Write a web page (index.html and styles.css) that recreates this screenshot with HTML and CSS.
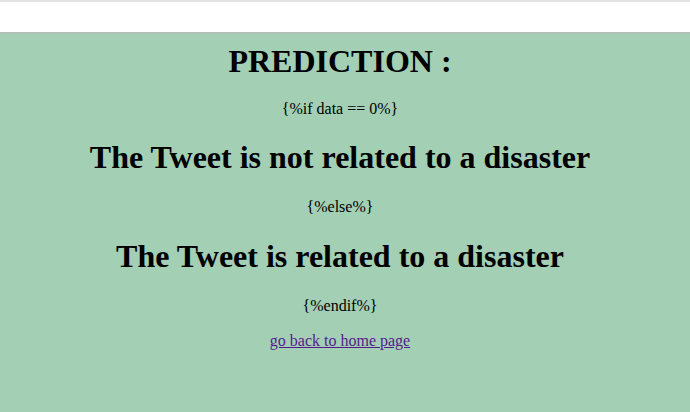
FILE: index.html
```html
<!DOCTYPE html>
<html>
<head>
<meta charset="utf-8">
<link rel="stylesheet" href="styles.css">
</head>
<body>
<div class="topbar"></div>
<main class="page">
  <h1 class="title">PREDICTION :</h1>
  <p class="tpl">{%if data == 0%}</p>
  <h1 class="result">The Tweet is not related to a disaster</h1>
  <p class="tpl">{%else%}</p>
  <h1 class="result">The Tweet is related to a disaster</h1>
  <p class="tpl">{%endif%}</p>
  <p class="back"><a class="back-link" href="#">go back to home page</a></p>
</main>
</body>
</html>
```
FILE: styles.css
```css
html, body {
  margin: 0;
  padding: 0;
  height: 100%;
}
body {
  font-family: "Liberation Serif", "Times New Roman", serif;
  background: #a3cfb4;
  display: flex;
  flex-direction: column;
  color: #000;
}
.topbar {
  height: 30px;
  background: #ffffff;
  border-top: 2px solid #e2e2e2;
  border-bottom: 2px solid #b3beb7;
  flex: none;
}
.page {
  flex: 1;
  text-align: center;
  padding: 9px 10px 0 0;
}
.title,
.result {
  font-size: 32px;
  line-height: 1.15;
  font-weight: bold;
  margin: 0.67em 0;
}
.title {
  margin-top: 0;
  margin-bottom: 19px;
}
.tpl,
.back {
  font-size: 16px;
  line-height: 19px;
  margin: 16px 0;
}
.back-link {
  color: #551a8b;
  text-decoration: underline;
}
```
